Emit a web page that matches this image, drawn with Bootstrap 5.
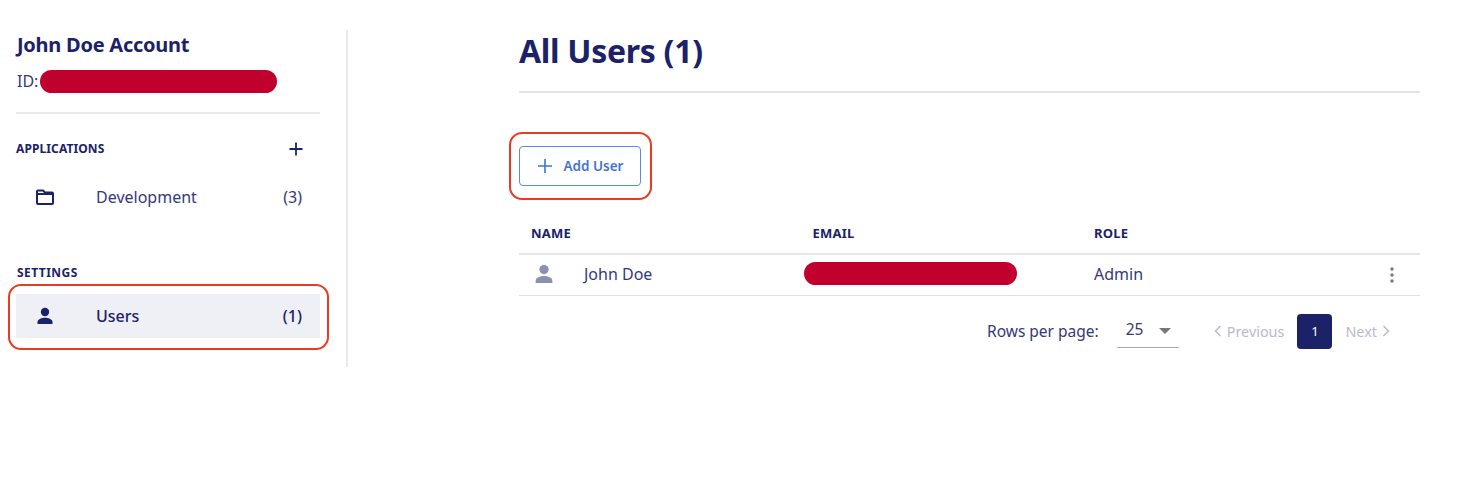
<!DOCTYPE html>
<html lang="en">
<head>
    <meta charset="UTF-8">
    <title>All Users</title>
    <link href="https://cdn.jsdelivr.net/npm/bootstrap@5.3.2/dist/css/bootstrap.min.css" rel="stylesheet">
    <style>
        body { font-family: "Noto Sans", "Liberation Sans", sans-serif; color: #1b2268; background: #fff; font-size: 16px; }
        .page-wrap { padding-top: 30px; height: 481px; }
        .side-col { width: 348px; height: 337px; padding: 0 26px 0 16px; border-right: 2px solid #e8e8f2; flex: none; }
        .main-col { width: 901px; margin-left: 171px; flex: none; }
        .acct-name { font-size: 20px; font-weight: 700; line-height: 28px; margin: 1px 0 10px 1px; letter-spacing: -.25px; }
        .acct-id { font-size: 16px; line-height: 24px; height: 24px; color: #34397a; gap: 2px; padding-left: 1px; }
        .redact { background: #c0002d; border-radius: 12px; height: 23px; display: block; }
        .redact-id { width: 237px; }
        .redact-mail { width: 213px; margin-left: -9px; }
        .side-rule { height: 2px; background: #e8e8f2; margin: 19px 0 24px; }
        .side-head { font-size: 12px; font-weight: 700; letter-spacing: .1px; line-height: 22px; height: 22px; }
        .side-head-set { letter-spacing: .45px; margin: -3px 0 10px; padding-left: 1px; }
        .plus-btn { margin-right: 16px; }
        .side-item { height: 44px; font-size: 16px; color: #34397a; padding: 0 18px 0 0; }
        .side-item-dev { margin: 13px 0 48px; padding-top: 4px; }
        .side-item .ico { width: 80px; padding-left: 19px; flex: none; }
        .side-item.is-active { background: #efeff6; color: #1b2268; font-weight: 500; position: relative; }
        .side-item.is-active::after, .add-wrap::after { content: ""; position: absolute; border: 2px solid #ec3a22; border-radius: 13px; }
        .side-item.is-active::after { inset: -10px -9px -12px -8px; }
        .title-main { font-size: 32px; font-weight: 700; line-height: 44px; margin: -1px 0 0; letter-spacing: -.3px; }
        .main-rule { height: 2px; background: #e3e3ee; margin: 18px 0 53px; }
        .add-wrap { position: relative; width: 122px; }
        .add-wrap::after { inset: -14px -11px -14px -10px; }
        .add-btn { width: 122px; height: 40px; border: 1.5px solid #5a8ae0; color: #3f73d8; font-size: 13.5px; font-weight: 600; padding: 0 0 0 1px; border-radius: 4px; gap: 12px; background: #fff; }
        .user-tbl { margin: 28px 0 0; table-layout: fixed; width: 100%; color: #34397a; }
        .user-tbl th { font-size: 13px; font-weight: 700; letter-spacing: .2px; color: #1b2268; height: 40px; padding: 0 12px; border-bottom: 2px solid #e6e6ea; vertical-align: middle; }
        .user-tbl td { height: 41px; padding: 0 12px 2px; border-bottom: 1px solid #e0e0e6; vertical-align: middle; font-size: 16px; }
        .col-data { width: 281.5px; }
        .name-cell { gap: 28px; padding-left: 1px; }
        .dots-cell { text-align: right; }
        .dots-ico { margin-right: 14px; }
        .page-row { margin-top: 18px; height: 36px; padding-right: 30px; font-size: 15.5px; color: #34397a; }
        .rows-sel { width: 62px; height: 33px; margin: 0 35px 0 18px; border-bottom: 1px solid #a9a9ad; padding: 0 8px 5px 9px; line-height: 26px; }
        .caret-dn { width: 0; height: 0; border: 6px solid transparent; border-top: 6px solid #77777f; border-bottom: 0; margin-top: 5px; }
        .pg-muted { color: #b9bacd; font-size: 14.4px; gap: 5px; }
        .pg-cur { width: 35px; height: 35px; background: #1b2268; color: #fff; border-radius: 4px; font-size: 13px; margin: 0 13px; }
    </style>
</head>
<body>
    <div class="page-wrap d-flex">
        <div class="side-col">
            <div class="acct-name">John Doe Account</div>
            <div class="acct-id d-flex align-items-center">ID: <span class="redact redact-id"></span></div>
            <div class="side-rule"></div>

            <div class="side-head d-flex justify-content-between align-items-center">
                <span>APPLICATIONS</span>
                <svg class="plus-btn" width="16" height="16" viewBox="0 0 16 16"><path d="M8 1.5v13M1.5 8h13" stroke="#1b2268" stroke-width="1.8"/></svg>
            </div>
            <div class="side-item side-item-dev d-flex align-items-center">
                <div class="ico">
                    <svg class="d-block" width="20" height="16" viewBox="0 0 20 16"><path d="M3 1.500h5l2 2h7a1 1 0 0 1 1 1V14a1 1 0 0 1-1 1H3a1 1 0 0 1-1-1V2.500a1 1 0 0 1 1-1z M2 5h16" fill="none" stroke="#1b2268" stroke-width="2"/></svg>
                </div>
                <span class="flex-grow-1">Development</span>
                <span>(3)</span>
            </div>

            <div class="side-head side-head-set">SETTINGS</div>
            <div class="side-item is-active d-flex align-items-center">
                <div class="ico">
                    <svg class="d-block" width="20" height="18" viewBox="0 0 20 18"><circle cx="10" cy="5" r="4.200" fill="#1b2268"/><path d="M2.500 17v-2c0-2.800 4.500-4.200 7.500-4.200s7.500 1.400 7.500 4.200v2z" fill="#1b2268"/></svg>
                </div>
                <span class="flex-grow-1">Users</span>
                <span>(1)</span>
            </div>
        </div>

        <div class="main-col">
            <h1 class="title-main">All Users (1)</h1>
            <div class="main-rule"></div>

            <div class="add-wrap">
                <button type="button" class="btn add-btn d-flex align-items-center justify-content-center">
                    <svg width="14" height="14" viewBox="0 0 14 14"><path d="M7 0v14M0 7h14" stroke="#3f73d8" stroke-width="1.600"/></svg>
                    Add User
                </button>
            </div>

            <table class="user-tbl">
                <thead>
                    <tr><th class="col-data">NAME</th><th class="col-data">EMAIL</th><th class="col-data">ROLE</th><th></th></tr>
                </thead>
                <tbody>
                    <tr>
                        <td>
                            <div class="name-cell d-flex align-items-center">
                                <svg width="24" height="20" viewBox="0 0 20 18"><circle cx="10" cy="5" r="4.200" fill="#8d8fb2"/><path d="M2.500 17v-2c0-2.800 4.500-4.200 7.500-4.200s7.500 1.400 7.500 4.200v2z" fill="#8d8fb2"/></svg>
                                <span>John Doe</span>
                            </div>
                        </td>
                        <td><span class="redact redact-mail"></span></td>
                        <td>Admin</td>
                        <td class="dots-cell">
                            <svg class="dots-ico" width="4" height="16" viewBox="0 0 4 16"><circle cx="2" cy="2" r="1.700" fill="#77777f"/><circle cx="2" cy="8" r="1.700" fill="#77777f"/><circle cx="2" cy="14" r="1.700" fill="#77777f"/></svg>
                        </td>
                    </tr>
                </tbody>
            </table>

            <div class="page-row d-flex justify-content-end align-items-center">
                <span>Rows per page:</span>
                <div class="rows-sel d-flex justify-content-between align-items-center"><span>25</span><span class="caret-dn"></span></div>
                <span class="pg-muted d-flex align-items-center">
                    <svg width="8" height="12" viewBox="0 0 8 12"><path d="M6.500 1L1.500 6l5 5" fill="none" stroke="#b9bacd" stroke-width="1.500"/></svg>
                    Previous
                </span>
                <span class="pg-cur d-flex align-items-center justify-content-center">1</span>
                <span class="pg-muted d-flex align-items-center">
                    Next
                    <svg width="8" height="12" viewBox="0 0 8 12"><path d="M1.500 1l5 5-5 5" fill="none" stroke="#b9bacd" stroke-width="1.500"/></svg>
                </span>
            </div>
        </div>
    </div>
    <script src="https://cdn.jsdelivr.net/npm/bootstrap@5.3.2/dist/js/bootstrap.bundle.min.js"></script>
</body>
</html>
